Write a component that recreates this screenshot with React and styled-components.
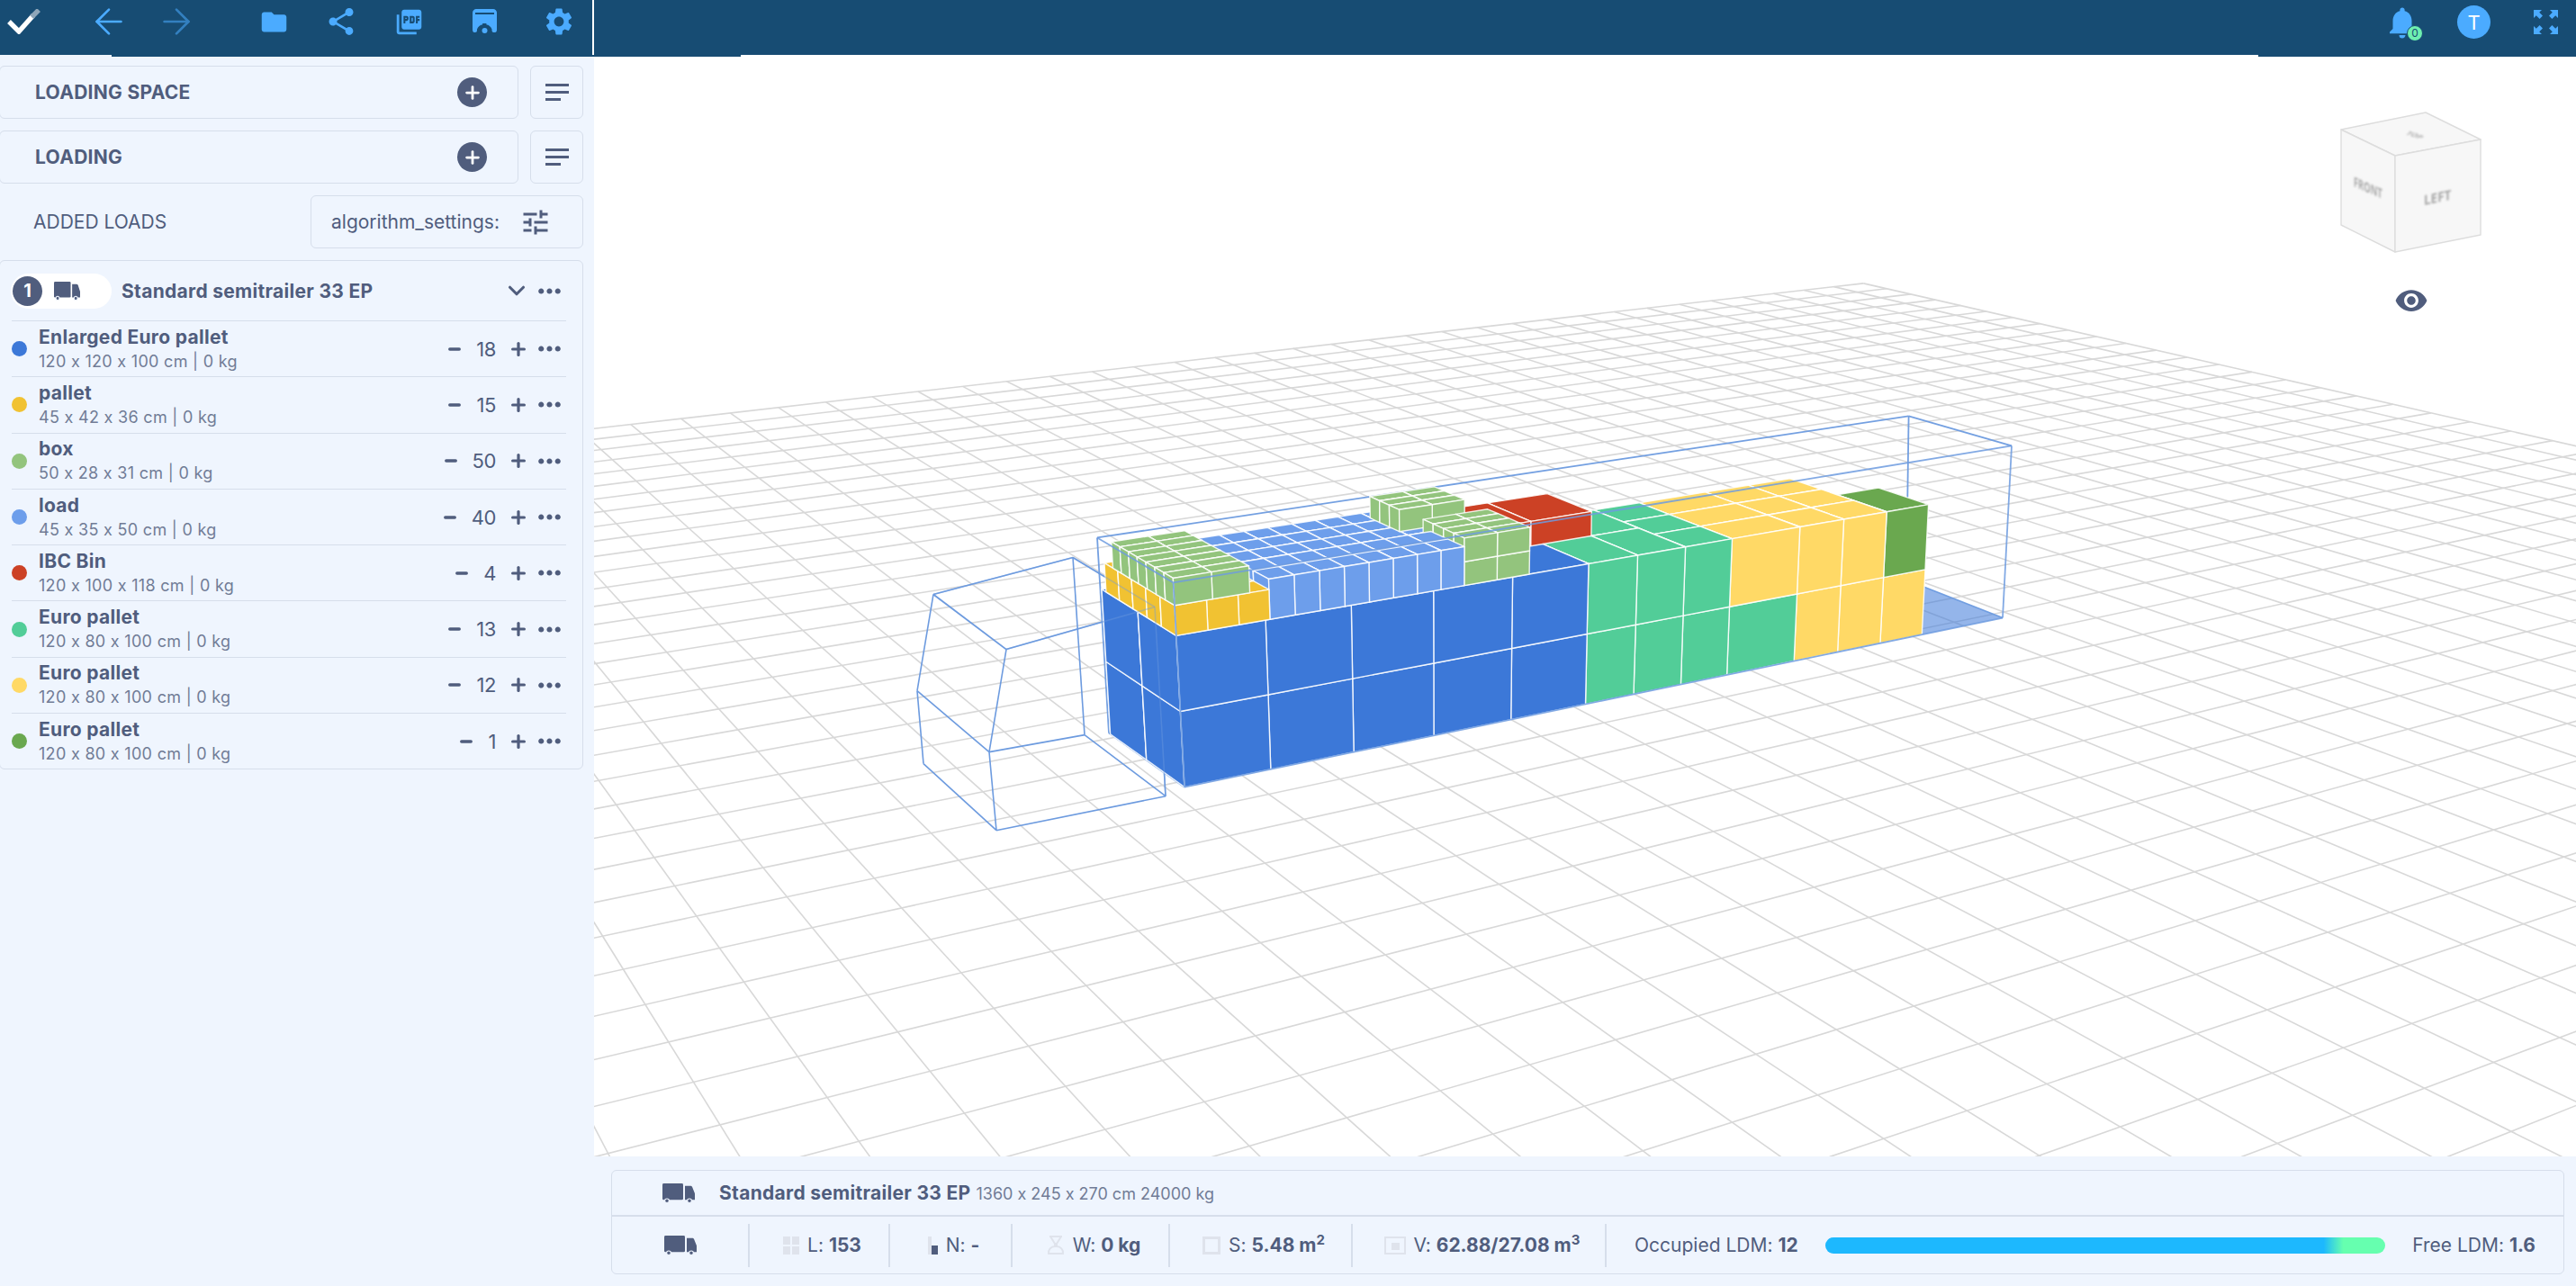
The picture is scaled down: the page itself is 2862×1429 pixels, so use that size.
import React from "react";
import styled, { createGlobalStyle } from "styled-components";
import { ArrowLeft, ArrowRight, ChevronDown, Plus, Minus } from "lucide-react";
import { MdFolder, MdShare, MdPictureAsPdf, MdSettings, MdNotifications, MdVisibility, MdTune, MdMoreHoriz } from "react-icons/md";

const INK = "#505d7d";
const SOFT = "#717c96";
const LINE = "#d6deeb";
const PANEL = "#eff5fe";
const SKY = "#4babff";
const NAVY = "#174c73";

const Global = createGlobalStyle`
  html, body { margin: 0; padding: 0; background: #fff; }
  body { font-family: Inter, "Liberation Sans", sans-serif; font-feature-settings: "calt" 0; color: ${INK}; overflow: hidden; }
  * { box-sizing: border-box; }
`;

/* ---------- projection ---------- */
function solve(A, b) {
  const n = b.length;
  const M = A.map((r, i) => [...r, b[i]]);
  for (let c = 0; c < n; c++) {
    let p = c;
    for (let r = c + 1; r < n; r++) if (Math.abs(M[r][c]) > Math.abs(M[p][c])) p = r;
    [M[c], M[p]] = [M[p], M[c]];
    for (let r = 0; r < n; r++) {
      if (r === c) continue;
      const f = M[r][c] / M[c][c];
      for (let k = c; k <= n; k++) M[r][k] -= f * M[c][k];
    }
  }
  return M.map((r, i) => r[n] / r[i]);
}
function homography(src, dst) {
  const A = [], b = [];
  src.forEach(([x, y], i) => {
    const [u, v] = dst[i];
    A.push([x, y, 1, 0, 0, 0, -u * x, -u * y]); b.push(u);
    A.push([0, 0, 0, x, y, 1, -v * x, -v * y]); b.push(v);
  });
  return [...solve(A, b), 1];
}
const apply = (h, x, y) => {
  const w = h[6] * x + h[7] * y + h[8];
  return [(h[0] * x + h[1] * y + h[2]) / w, (h[3] * x + h[4] * y + h[5]) / w];
};
const L = 1360, W = 245, H = 270;
const corners = [[0, 0], [0, W], [L, 0], [L, W]];
const H0 = homography(corners, [[1316, 875], [1232, 815], [2225, 687], [2118, 645]]);
const H1 = homography(corners, [[1303.6, 648], [1219, 598], [2235, 496], [2120.6, 463]]);
const project = (x, y, z) => {
  const a = apply(H0, x, y), b = apply(H1, x, y), t = z / H;
  return [a[0] + (b[0] - a[0]) * t, a[1] + (b[1] - a[1]) * t];
};
const pts = (list) => list.map((p) => project(...p).map((v) => v.toFixed(1)).join(",")).join(" ");

const HG = [-48.062246, 1.0502608, 2070.3044, 1.3461142, 2.1029775, 315.6606, -0.0075117813, -0.011901073, 1];

/* ---------- cargo ---------- */
const range = (from, step, n) => Array.from({ length: n + 1 }, (_, i) => from + step * i);
const BLUE = "#3c78d8", YEL = "#f1c232", LGREEN = "#93c47d", LBLUE = "#6d9eeb", RED = "#cc4125", EGREEN = "#52cd98", LYEL = "#ffd966", DGREEN = "#6aa84f";
const blocks = [
  { x: [0, 120, 240, 360, 480], y: [0, 120, 240], z: [0, 100, 200], c: BLUE },
  { x: [480, 600], y: [0, 120], z: [0, 100, 200], c: BLUE },
  { x: [480, 580, 680], y: [120, 240], z: [0, 118, 236], c: RED },
  { x: range(0, 42, 3), y: range(0, 45, 5), z: [200, 240], c: YEL },
  { x: [0, 50, 100], y: range(0, 28, 7), z: [240, 276], c: LGREEN },
  { x: range(126, 35, 8), y: range(0, 45, 5), z: [200, 254], c: LBLUE },
  { x: [406, 456, 506], y: [0, 28, 56, 84, 112], z: [200, 233, 266], c: LGREEN },
  { x: [370, 420, 470], y: [112, 140, 168, 196], z: [254, 285], c: LGREEN },
  { x: [600, 680, 760, 840, 960], y: [0, 120], z: [0, 100], c: EGREEN },
  { x: [680, 760, 840, 960], y: [120, 240], z: [0, 100], c: EGREEN },
  { x: [600, 680], y: [0, 120], z: [100, 200], c: EGREEN },
  { x: [680, 760], y: [0, 120, 240], z: [100, 200], c: EGREEN },
  { x: [760, 840], y: [0, 80, 160, 240], z: [100, 200], c: EGREEN },
  { x: [960, 1040, 1120, 1200], y: [0, 80, 160, 240], z: [0, 100], c: LYEL },
  { x: [840, 960, 1040, 1120], y: [0, 80, 160, 240], z: [100, 200], c: LYEL },
  { x: [1120, 1200], y: [0, 120], z: [100, 200], c: DGREEN },
];
function expand() {
  const out = [];
  blocks.forEach((b) => {
    for (let i = 0; i + 1 < b.x.length; i++)
      for (let j = 0; j + 1 < b.y.length; j++)
        for (let k = 0; k + 1 < b.z.length; k++)
          out.push({ x0: b.x[i], x1: b.x[i + 1], y0: b.y[j], y1: b.y[j + 1], z0: b.z[k], z1: b.z[k + 1], c: b.c });
  });
  return out;
}
const behind = (a, b) => a.x0 >= b.x1 || a.y0 >= b.y1 || a.z1 <= b.z0;
function paintOrder(list) {
  const left = [...list], out = [];
  const depth = (a) => a.x0 + 2 * a.y0 - 2 * a.z0;
  while (left.length) {
    let idx = left.findIndex((a) => left.every((b) => b === a || !behind(b, a) || behind(a, b)));
    if (idx < 0) {
      idx = 0;
      left.forEach((a, i) => { if (depth(a) > depth(left[idx])) idx = i; });
    }
    out.push(left.splice(idx, 1)[0]);
  }
  return out;
}
const cells = paintOrder(expand());

function groundLine(x0, y0, x1, y1) {
  const w = (x, y) => HG[6] * x + HG[7] * y + HG[8];
  const w0 = w(x0, y0), w1 = w(x1, y1), m = 0.08;
  let b = [x1, y1];
  if (w0 < m && w1 < m) return null;
  if (w1 < m) { const t = (m - w0) / (w1 - w0); b = [x0 + (x1 - x0) * t, y0 + (y1 - y0) * t]; }
  return [apply(HG, x0, y0), apply(HG, ...b)];
}
function gridSegments() {
  const N = 70, out = [];
  for (let i = 0; i <= N; i++) {
    out.push(groundLine(i, 0, i, N));
    out.push(groundLine(0, i, N, i));
  }
  return out.filter(Boolean);
}

const frameBack = [
  [[L, W, 0], [0, W, 0]], [[0, W, 0], [0, 0, 0]], [[0, W, 0], [0, W, H]], [[L, W, 0], [L, W, H]],
  [[L, 0, 0], [L, W, 0]], [[L, W, H], [0, W, H]], [[L, 0, H], [L, W, H]],
];
const frameFront = [
  [[0, 0, 0], [L, 0, 0]], [[0, 0, H], [L, 0, H]], [[0, W, H], [0, 0, H]], [[0, 0, 0], [0, 0, H]], [[L, 0, 0], [L, 0, H]],
];
const FrameLines = ({ list, opacity }) => (
  <g stroke="#6d9bdf" strokeWidth="1.8" strokeOpacity={opacity}>
    {list.map(([p, q], i) => {
      const a = project(...p), b = project(...q);
      return <line key={i} x1={a[0]} y1={a[1]} x2={b[0]} y2={b[1]} />;
    })}
  </g>
);
const cab = {
  a: [1192, 620], b: [1037, 661], c: [1118, 722], d: [1283, 675], e: [1019, 768],
  f: [1099, 836], g: [1026, 849], h: [1107, 923], i: [1295, 885], j: [1205, 817],
};
const cabBack = ["ab", "bc", "cd", "ad", "di"];
const cabFront = ["aj", "jf", "be", "eg", "cf", "fh", "ef", "gh", "hi", "ij"];
const CabLines = ({ list, opacity = 1 }) => (
  <g stroke="#6d9bdf" strokeWidth="1.6" strokeOpacity={opacity}>
    {list.map((e) => (
      <line key={e} x1={cab[e[0]][0]} y1={cab[e[0]][1]} x2={cab[e[1]][0]} y2={cab[e[1]][1]} />
    ))}
  </g>
);

const Scene3D = () => (
  <SceneSvg viewBox="660 62 2202 1223" preserveAspectRatio="none">
    <g stroke="#d8d8d8" strokeWidth="1.6" fill="none">
      {gridSegments().map(([p, q], i) => (
        <line key={i} x1={p[0]} y1={p[1]} x2={q[0]} y2={q[1]} />
      ))}
    </g>
    <polygon points={pts([[0, 0, 0], [L, 0, 0], [L, W, 0], [0, W, 0]])} fill="#3c78d8" fillOpacity="0.55" />
    <CabLines list={cabBack} />
    <FrameLines list={frameBack} opacity={0.95} />
    <g stroke="#ffffff" strokeOpacity="0.85" strokeWidth="1.4" strokeLinejoin="round">
      {cells.map((b, i) => {
        const { x0, x1, y0, y1, z0, z1, c } = b;
        return (
          <g key={i} fill={c}>
            <polygon points={pts([[x0, y0, z1], [x1, y0, z1], [x1, y1, z1], [x0, y1, z1]])} />
            <polygon points={pts([[x0, y0, z0], [x0, y1, z0], [x0, y1, z1], [x0, y0, z1]])} />
            <polygon points={pts([[x0, y0, z0], [x1, y0, z0], [x1, y0, z1], [x0, y0, z1]])} />
          </g>
        );
      })}
    </g>
    <CabLines list={cabBack} opacity={0.4} />
    <FrameLines list={frameFront} opacity={0.85} />
    <CabLines list={cabFront} />
  </SceneSvg>
);

/* ---------- icons ---------- */
const TruckIcon = ({ w = 36, h = 22 }) => (
  <svg width={w} height={h} viewBox="0 0 36 24" fill={INK} preserveAspectRatio="none">
    <rect x="0" y="0" width="23" height="20" rx="1.5" />
    <path d="M25 3h6c1 0 1.700.5 2.100 1.400L35.500 11c.3.6.5 1.200.5 1.900V20H25z" />
    <circle cx="5" cy="21" r="2.400" stroke={PANEL} strokeWidth="1.200" />
    <circle cx="30" cy="21" r="2.400" stroke={PANEL} strokeWidth="1.200" />
  </svg>
);
const CheckLogo = () => (
  <svg width="38" height="28" viewBox="0 0 38 28" fill="none">
    <path d="M2 14 L13 25 L29 7" stroke="#fff" strokeWidth="5.400" />
    <path d="M27.200 9 L35 1" stroke="#8fa6b9" strokeWidth="5.400" />
  </svg>
);
const StoreIcon = () => (
  <svg width="27" height="28" viewBox="0 0 27 28" fill={SKY}>
    <path d="M4 0h19c2 0 4 2 4 4v19c0 2-.8 3-2 3h-1.500a2 2 0 0 1-2-2v-1.500c-1-3-3.600-5-6-5 .4-1-.2-1.500-1-1.500H12c-.8 0-1.400.5-1 1.500-2.400 0-5 2-6 5V24a2 2 0 0 1-2 2H2c-1.200 0-2-1-2-3V4c0-2 2-4 4-4z" />
    <rect x="3" y="4" width="21" height="2" fill={NAVY} />
    <circle cx="13.500" cy="24" r="3" />
  </svg>
);
const ExpandIcon = () => (
  <svg width="27" height="27" viewBox="0 0 27 27" fill={SKY}>
    <path d="M0 0h9L6.200 2.800 10 6.600 6.600 10 2.800 6.200 0 9zM27 0v9l-2.800-2.800L20.400 10 17 6.600l3.800-3.800L18 0zM0 27v-9l2.800 2.800L6.600 17 10 20.400l-3.800 3.800L9 27zM27 27h-9l2.800-2.800L17 20.400 20.400 17l3.800 3.800L27 18z" />
  </svg>
);
const LinesIcon = () => (
  <svg width="26" height="19" viewBox="0 0 26 19" fill={INK}>
    <rect x="0" y="0" width="26" height="3" />
    <rect x="0" y="8" width="26" height="3" />
    <rect x="0" y="16" width="17" height="3" />
  </svg>
);
const StatL = () => (
  <svg width="18" height="20" viewBox="0 0 18 20" fill="#dfe3ec">
    <rect x="0" y="0" width="8" height="9" /><rect x="10" y="0" width="8" height="9" />
    <rect x="0" y="11" width="8" height="9" /><rect x="10" y="11" width="8" height="9" />
  </svg>
);
const StatN = () => (
  <svg width="11" height="20" viewBox="0 0 11 20">
    <rect x="0" y="0" width="4" height="20" fill="#dfe3ec" /><rect x="4" y="10" width="7" height="10" fill={INK} />
  </svg>
);
const StatW = () => (
  <svg width="20" height="22" viewBox="0 0 20 22" fill="none" stroke="#dfe3ec" strokeWidth="2">
    <path d="M3 1h14M4 1l5 8h2l5-8M9 9v3a7 7 0 0 0-7 8h16a7 7 0 0 0-7-8V9" />
  </svg>
);
const StatS = () => (
  <svg width="20" height="20" viewBox="0 0 20 20" fill="none" stroke="#dfe3ec" strokeWidth="3">
    <rect x="1.500" y="1.500" width="17" height="17" />
  </svg>
);
const StatV = () => (
  <svg width="24" height="20" viewBox="0 0 24 20" fill="none" stroke="#dfe3ec" strokeWidth="2">
    <rect x="1" y="1" width="22" height="18" /><rect x="9" y="8" width="7" height="6" fill="#dfe3ec" />
  </svg>
);
const CubeSvg = styled.svg`
  position: absolute;
  left: 1930px;
  top: 53px;
  width: 180px;
  height: 180px;
`;
const Cube = () => (
  <CubeSvg viewBox="2590 115 180 180">
    <g stroke="#dddddd" strokeWidth="1.400" fill="#f7f7f7" strokeLinejoin="round">
      <polygon points="2601,145 2695,126 2756,156 2661,174" />
      <polygon points="2601,145 2661,174 2661,281 2601,251" />
      <polygon points="2661,174 2756,156 2756,262 2661,281" />
    </g>
    <g fill="#a8a8a8" fontFamily="'Open Sans', sans-serif" fontWeight="700" fontSize="15" style={{ filter: "blur(0.8px)" }}>
      <text transform="matrix(0.62,0.27,0,1,2615,208)">FRONT</text>
      <text transform="matrix(0.9,-0.19,0,1,2693,229)">LEFT</text>
      <text transform="matrix(0.6,0.2,-0.5,0.3,2672,150)" fontSize="14">TOP</text>
    </g>
  </CubeSvg>
);

/* ---------- layout ---------- */
const Page = styled.div`
  width: 2862px;
  height: 1429px;
  display: flex;
  flex-direction: column;
  overflow: hidden;
  position: relative;
`;
const TopBar = styled.header`
  height: 61px;
  flex: none;
  background: ${NAVY};
  display: flex;
  align-items: center;
  color: ${SKY};
  position: relative;
`;
const TopLeft = styled.div`
  width: 660px;
  height: 100%;
  border-right: 2px solid #fff;
  display: flex;
  align-items: center;
  padding: 0 0 13px 8px;
`;
const NavGroup = styled.div`
  display: flex;
  align-items: center;
  gap: 45px;
  margin-left: ${(p) => p.$ml}px;
`;
const NavIcon = styled.span`
  display: inline-flex;
  align-items: center;
  justify-content: center;
  width: 30px;
  color: ${SKY};
  margin-left: ${(p) => p.$ml || 0}px;
  opacity: ${(p) => (p.$dim ? 0.55 : 1)};
  svg { flex: none; }
`;
const TopRight = styled.div`
  margin-left: auto;
  display: flex;
  align-items: center;
  padding: 0 20px 12px 0;
`;
const Bell = styled.span`
  position: relative;
  display: inline-flex;
  width: 40px;
  height: 40px;
  align-items: center;
  justify-content: center;
  svg { flex: none; }
`;
const BellBadge = styled.span`
  position: absolute;
  right: -3px;
  bottom: -1px;
  width: 18px;
  height: 18px;
  border-radius: 50%;
  background: #6ef0b0;
  border: 1px solid #174c73;
  color: #174c73;
  font-size: 12px;
  display: flex;
  align-items: center;
  justify-content: center;
`;
const Avatar = styled.span`
  width: 37px;
  height: 37px;
  margin-left: 41px;
  border-radius: 50%;
  background: ${SKY};
  color: #fff;
  font-size: 22px;
  display: flex;
  align-items: center;
  justify-content: center;
`;
const ExpandSlot = styled.span`
  display: inline-flex;
  margin-left: 48px;
`;
const TopRule = styled.i`
  position: absolute;
  top: 61px;
  left: ${(p) => p.$l}px;
  width: ${(p) => p.$w}px;
  height: 1.500px;
  background: ${NAVY};
  z-index: 2;
`;
const Main = styled.div`
  flex: 1;
  display: flex;
  min-height: 0;
`;
const Sidebar = styled.aside`
  width: 660px;
  flex: none;
  background: ${PANEL};
  padding: 12px 12px 0 0;
  display: flex;
  flex-direction: column;
  gap: 13px;
`;
const ActionRow = styled.div`
  display: flex;
  gap: 13px;
  height: 59px;
`;
const ActionCard = styled.div`
  flex: 1;
  margin-left: -1px;
  border: 1.500px solid ${LINE};
  border-radius: 6px;
  display: flex;
  align-items: center;
  justify-content: space-between;
  padding: 0 34px 0 39px;
`;
const ActionTitle = styled.span`
  font-size: 21px;
  font-weight: 700;
  letter-spacing: 0.3px;
`;
const Round = styled.span`
  width: 33px;
  height: 33px;
  border-radius: 50%;
  background: ${INK};
  color: #fff;
  display: flex;
  align-items: center;
  justify-content: center;
`;
const SquareBtn = styled.div`
  width: 59px;
  border: 1.500px solid ${LINE};
  border-radius: 6px;
  display: flex;
  align-items: center;
  justify-content: center;
`;
const AddedRow = styled.div`
  height: 59px;
  display: flex;
  align-items: center;
  justify-content: space-between;
  padding-left: 37px;
  font-size: 21px;
`;
const AlgoBtn = styled.div`
  width: 303px;
  height: 100%;
  border: 1.500px solid ${LINE};
  border-radius: 6px;
  display: flex;
  align-items: center;
  justify-content: space-between;
  padding: 0 34px 0 22px;
`;
const Card = styled.section`
  margin-left: -1px;
  border: 1.500px solid ${LINE};
  border-radius: 6px;
  padding: 0 18px 0 13px;
`;
const CardHead = styled.div`
  height: 66px;
  display: flex;
  align-items: center;
`;
const Pill = styled.div`
  width: 112px;
  height: 39px;
  margin-left: -1px;
  border-radius: 20px;
  background: #fff;
  display: flex;
  align-items: center;
  gap: 13px;
  padding-left: 2px;
`;
const NumBadge = styled.span`
  width: 33px;
  height: 33px;
  border-radius: 50%;
  background: ${INK};
  color: #fff;
  font-size: 20px;
  font-weight: 700;
  display: flex;
  align-items: center;
  justify-content: center;
`;
const CardTitle = styled.span`
  flex: 1;
  margin-left: 11px;
  font-size: 21px;
  font-weight: 700;
  letter-spacing: 0.3px;
`;
const More = styled.span`
  display: inline-flex;
  width: 37px;
  justify-content: center;
  margin-left: ${(p) => p.$ml}px;
`;
const Item = styled.div`
  height: 62.300px;
  border-top: 1.500px solid ${LINE};
  display: flex;
  align-items: center;
`;
const Dot = styled.span`
  width: 17px;
  height: 17px;
  border-radius: 50%;
  background: ${(p) => p.$c};
  flex: none;
`;
const ItemText = styled.div`
  flex: 1;
  margin-left: 13px;
  display: flex;
  flex-direction: column;
  gap: 5px;
`;
const ItemName = styled.span`
  font-size: 21px;
  line-height: 23px;
  font-weight: 700;
  letter-spacing: 0.3px;
`;
const ItemSub = styled.span`
  font-size: 18px;
  line-height: 22px;
  color: ${SOFT};
  letter-spacing: 0.3px;
`;
const Count = styled.span`
  font-size: 22px;
  margin: 0 14px 0 15px;
  letter-spacing: -0.4px;
`;
const Workspace = styled.div`
  flex: 1;
  min-width: 0;
  display: flex;
  flex-direction: column;
`;
const Scene = styled.div`
  flex: 1;
  min-height: 0;
  position: relative;
  overflow: hidden;
`;
const SceneSvg = styled.svg`
  display: block;
  width: 100%;
  height: 100%;
`;
const Eye = styled.span`
  position: absolute;
  left: 2000px;
  top: 254px;
  color: ${INK};
  display: inline-flex;
`;
const Bottom = styled.footer`
  height: 144px;
  flex: none;
  background: ${PANEL};
  padding: 15px 13px 13px 19px;
`;
const BottomPanel = styled.div`
  height: 116px;
  border: 1.500px solid ${LINE};
  border-radius: 6px;
  display: flex;
  flex-direction: column;
`;
const InfoRow = styled.div`
  height: 51px;
  flex: none;
  border-bottom: 2px solid ${LINE};
  display: flex;
  align-items: center;
  padding-left: 56px;
  gap: 27px;
`;
const InfoTitle = styled.span`
  font-size: 21px;
  font-weight: 700;
  letter-spacing: 0.3px;
`;
const InfoSub = styled.span`
  font-size: 18px;
  color: ${SOFT};
  margin-left: 6px;
`;
const Stats = styled.div`
  flex: 1;
  display: grid;
  grid-template-columns: 151px 156px 136px 175px 203px 282px 1fr;
  align-items: center;
`;
const Stat = styled.div`
  height: 48px;
  display: flex;
  align-items: center;
  justify-content: center;
  gap: 9px;
  font-size: 21px;
  padding-left: ${(p) => (p.$first ? 0 : 7)}px;
  border-left: ${(p) => (p.$first ? "none" : `2px solid ${LINE}`)};
  b { font-weight: 700; }
  sup { font-size: 15px; line-height: 0; }
`;
const LdmStat = styled(Stat)`
  justify-content: flex-start;
  padding: 0 31px;
  gap: 30px;
`;
const Bar = styled.div`
  flex: 1;
  height: 18px;
  border-radius: 9px;
  background: linear-gradient(90deg, #1db8fe 89%, #66ffaf 92.500%);
`;

const rows = [
  ["#3c78d8", "Enlarged Euro pallet", "120 x 120 x 100 cm | 0 kg", 18],
  ["#f1c232", "pallet", "45 x 42 x 36 cm | 0 kg", 15],
  ["#93c47d", "box", "50 x 28 x 31 cm | 0 kg", 50],
  ["#6d9eeb", "load", "45 x 35 x 50 cm | 0 kg", 40],
  ["#cc4125", "IBC Bin", "120 x 100 x 118 cm | 0 kg", 4],
  ["#52cd98", "Euro pallet", "120 x 80 x 100 cm | 0 kg", 13],
  ["#ffd966", "Euro pallet", "120 x 80 x 100 cm | 0 kg", 12],
  ["#6aa84f", "Euro pallet", "120 x 80 x 100 cm | 0 kg", 1],
];

export default function App() {
  return (
    <Page>
      <Global />
      <TopBar>
        <TopLeft>
          <CheckLogo />
          <NavGroup $ml={60}>
            <NavIcon><ArrowLeft size={46} strokeWidth={1.400} /></NavIcon>
            <NavIcon $dim><ArrowRight size={46} strokeWidth={1.400} /></NavIcon>
          </NavGroup>
          <NavGroup $ml={78}>
            <NavIcon><MdFolder size={33} /></NavIcon>
            <NavIcon><MdShare size={36} /></NavIcon>
            <NavIcon><MdPictureAsPdf size={33} /></NavIcon>
            <NavIcon $ml={9}><StoreIcon /></NavIcon>
            <NavIcon $ml={8}><MdSettings size={36} /></NavIcon>
          </NavGroup>
        </TopLeft>
        <TopRight>
          <Bell>
            <MdNotifications size={42} />
            <BellBadge>0</BellBadge>
          </Bell>
          <Avatar>T</Avatar>
          <ExpandSlot><ExpandIcon /></ExpandSlot>
        </TopRight>
      </TopBar>
      <TopRule $l={124} $w={699} />
      <TopRule $l={2509} $w={353} />
      <Main>
        <Sidebar>
          <ActionRow>
            <ActionCard>
              <ActionTitle>LOADING SPACE</ActionTitle>
              <Round><Plus size={22} strokeWidth={3} /></Round>
            </ActionCard>
            <SquareBtn><LinesIcon /></SquareBtn>
          </ActionRow>
          <ActionRow>
            <ActionCard>
              <ActionTitle>LOADING</ActionTitle>
              <Round><Plus size={22} strokeWidth={3} /></Round>
            </ActionCard>
            <SquareBtn><LinesIcon /></SquareBtn>
          </ActionRow>
          <AddedRow>
            <span>ADDED LOADS</span>
            <AlgoBtn>
              <span>algorithm_settings:</span>
              <MdTune size={36} />
            </AlgoBtn>
          </AddedRow>
          <Card>
            <CardHead>
              <Pill>
                <NumBadge>1</NumBadge>
                <TruckIcon w={29} h={21} />
              </Pill>
              <CardTitle>Standard semitrailer 33 EP</CardTitle>
              <ChevronDown size={30} strokeWidth={2.500} />
              <More $ml={3}><MdMoreHoriz size={37} /></More>
            </CardHead>
            {rows.map(([c, name, sub, n], i) => (
              <Item key={i}>
                <Dot $c={c} />
                <ItemText>
                  <ItemName>{name}</ItemName>
                  <ItemSub>{sub}</ItemSub>
                </ItemText>
                <Minus size={18} strokeWidth={4.500} />
                <Count>{n}</Count>
                <Plus size={22} strokeWidth={3.500} />
                <More $ml={5}><MdMoreHoriz size={37} /></More>
              </Item>
            ))}
          </Card>
        </Sidebar>
        <Workspace>
          <Scene>
            <Scene3D />
            <Cube />
            <Eye><MdVisibility size={38} /></Eye>
          </Scene>
          <Bottom>
            <BottomPanel>
              <InfoRow>
                <TruckIcon />
                <span>
                  <InfoTitle>Standard semitrailer 33 EP</InfoTitle>
                  <InfoSub>1360 x 245 x 270 cm 24000 kg</InfoSub>
                </span>
              </InfoRow>
              <Stats>
                <Stat $first><TruckIcon /></Stat>
                <Stat><StatL /><span>L: <b>153</b></span></Stat>
                <Stat><StatN /><span>N: <b>-</b></span></Stat>
                <Stat><StatW /><span>W: <b>0 kg</b></span></Stat>
                <Stat><StatS /><span>S: <b>5.48 m<sup>2</sup></b></span></Stat>
                <Stat><StatV /><span>V: <b>62.88/27.08 m<sup>3</sup></b></span></Stat>
                <LdmStat>
                  <span>Occupied LDM: <b>12</b></span>
                  <Bar />
                  <span>Free LDM: <b>1.6</b></span>
                </LdmStat>
              </Stats>
            </BottomPanel>
          </Bottom>
        </Workspace>
      </Main>
    </Page>
  );
}
